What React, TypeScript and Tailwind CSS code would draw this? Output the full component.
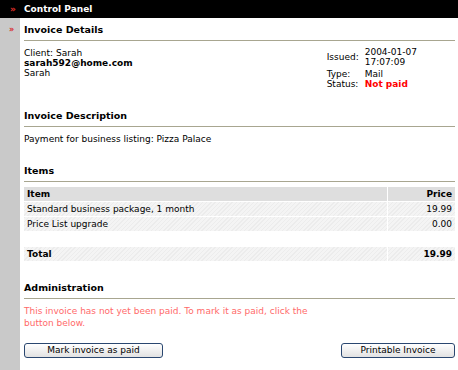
const hatch =
  'bg-[repeating-linear-gradient(135deg,#ececec_0px,#ececec_1px,#f4f4f4_1px,#f4f4f4_3px)]'

function SectionHeading({ title, className = '' }: { title: string; className?: string }) {
  return (
    <div className={`border-b border-[#a8a690] pb-[4px] ${className}`}>
      <h2 className="text-[9.5px] leading-[12px] font-bold text-black">{title}</h2>
    </div>
  )
}

function PanelButton({ label, className = '' }: { label: string; className?: string }) {
  return (
    <button
      type="button"
      className={`h-[15px] rounded-[3px] border border-[#2a4770] bg-gradient-to-b from-white to-[#e2e2e2] text-[9px] leading-[13px] text-black ${className}`}
    >
      {label}
    </button>
  )
}

export default function App() {
  return (
    <div className="flex h-[370px] w-[458px] flex-col bg-white font-['DejaVu_Sans',Verdana,sans-serif] text-[9px] text-black">
      <header className="flex h-[18px] shrink-0 items-center bg-black">
        <span className="ml-[10px] w-[14px] text-[9px] leading-[10px] font-bold text-[#e0302a]">»</span>
        <span className="text-[9px] leading-[12px] font-bold text-white">Control Panel</span>
      </header>

      <div className="flex flex-1">
        <aside className="w-[20px] shrink-0 bg-[#c9c9c9]">
          <div className="mt-[8px] ml-[9px] text-[8px] leading-[8px] font-bold text-[#d8262a]">»</div>
        </aside>

        <main className="flex-1 pr-[3px] pl-[4px]">
          <SectionHeading title="Invoice Details" className="mt-[6px]" />

          <div className="flex items-start justify-between">
            <div className="pt-[7px] leading-[10px]">
              <div>Client: Sarah</div>
              <div className="font-bold">sarah592@home.com</div>
              <div>Sarah</div>
            </div>
            <div className="mr-[38px] grid grid-cols-[auto_auto] gap-x-[6px] gap-y-[2px] pt-[6px] leading-[10px]">
              <div className="self-center">Issued:</div>
              <div>
                2004-01-07
                <br />
                17:07:09
              </div>
              <div>Type:</div>
              <div>Mail</div>
              <div className="-mt-[2px]">Status:</div>
              <div className="-mt-[2px] font-bold text-[#ff0000]">Not paid</div>
            </div>
          </div>

          <SectionHeading title="Invoice Description" className="mt-[21px]" />
          <p className="mt-[7px] leading-[10px]">Payment for business listing: Pizza Palace</p>

          <SectionHeading title="Items" className="mt-[21px]" />

          <div className="mt-[5px] flex flex-col gap-[1px]">
            <div className="flex h-[14px] gap-[1px] font-bold leading-[14px]">
              <div className="flex-1 bg-[#dedede] pl-[3px]">Item</div>
              <div className="w-[67px] bg-[#dedede] pr-[3px] text-right">Price</div>
            </div>
            {[
              ['Standard business package, 1 month', '19.99'],
              ['Price List upgrade', '0.00'],
            ].map(([item, price]) => (
              <div key={item} className="flex h-[14px] gap-[1px] leading-[14px]">
                <div className={`flex-1 pl-[3px] ${hatch}`}>{item}</div>
                <div className={`w-[67px] pr-[3px] text-right ${hatch}`}>{price}</div>
              </div>
            ))}
          </div>

          <div className="mt-[16px] flex h-[14px] gap-[1px] font-bold leading-[14px]">
            <div className={`flex-1 pl-[3px] ${hatch}`}>Total</div>
            <div className={`w-[67px] pr-[3px] text-right ${hatch}`}>19.99</div>
          </div>

          <SectionHeading title="Administration" className="mt-[21px]" />
          <p className="mt-[6px] max-w-[300px] leading-[12px] text-[#ff6a6a]">
            This invoice has not yet been paid. To mark it as paid, click the button below.
          </p>

          <div className="mt-[14px] flex justify-between">
            <PanelButton label="Mark invoice as paid" className="w-[139px]" />
            <PanelButton label="Printable Invoice" className="w-[114px]" />
          </div>
        </main>
      </div>
    </div>
  )
}
